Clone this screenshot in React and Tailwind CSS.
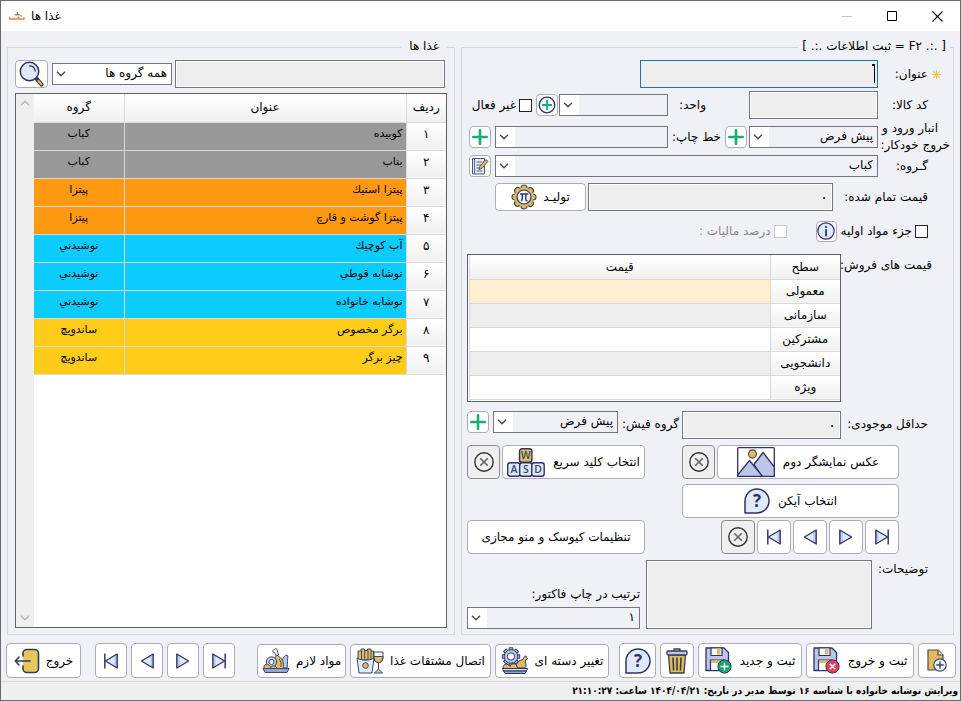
import React from 'react';

const NAVY = '#2f3267';
const PALE = '#dfeaf8';
const LILAC = '#bcc7e8';
const GOLD = '#dfbd5b';

/* ---------- icons ---------- */

function Chevron({ up = false, className = '' }) {
  return (
    <svg viewBox="0 0 10 6" className={`h-[6px] w-[10px] ${className}`} fill="none" stroke="currentColor" strokeWidth="1.3">
      <path d={up ? 'M1 5.2 5 1.2 9 5.2' : 'M1 .8 5 4.8 9 .8'} />
    </svg>
  );
}

function Plus() {
  return (
    <svg viewBox="0 0 16 16" className="size-4" stroke="#12ae74" strokeWidth="2.6" strokeLinecap="round">
      <path d="M8 1.3v13.4M1.3 8h13.4" />
    </svg>
  );
}

function PlusCircle() {
  return (
    <svg viewBox="0 0 18 18" className="size-[18px]" fill="none">
      <circle cx="9" cy="9" r="7.8" fill="#f2f7fd" stroke={NAVY} strokeWidth="1.3" />
      <path d="M9 4v10M4 9h10" stroke="#12ae74" strokeWidth="1.8" />
    </svg>
  );
}

function EditNote() {
  return (
    <svg viewBox="0 0 18 18" className="size-[18px]" fill="none" stroke="#4a5580">
      <path d="M1.5 1.5h12V16.500l-1 .5h-11z" fill={PALE} />
      <path d="M3.5 1.500v15M5.500 5h6M5.500 8h5M5.500 11h3M5.500 14h6" strokeWidth=".9" />
      <path d="m8 12.500 1-3.200L14.800 2.500l2.200 1.800-6 7.100z" fill={GOLD} stroke="#4b4a5e" strokeWidth=".9" />
    </svg>
  );
}

function Search() {
  return (
    <svg viewBox="0 0 26 26" className="size-[26px]" fill="none">
      <path d="m17 17 5.500 6.500" stroke="#3a3a50" strokeWidth="4.200" strokeLinecap="round" />
      <path d="m19.500 20 2.800 3.200" stroke={GOLD} strokeWidth="2" strokeLinecap="round" />
      <circle cx="10.500" cy="10.500" r="9.200" fill={PALE} stroke={NAVY} strokeWidth="1.500" />
      <path d="M10.500 4.800c3.200 0 5.400 2.200 5.700 5.200" stroke={NAVY} strokeWidth="1.300" strokeLinecap="round" />
    </svg>
  );
}

function PiGear() {
  const petals = [0, 45, 90, 135, 180, 225, 270, 315];
  return (
    <svg viewBox="0 0 26 26" className="size-[26px]">
      <g fill={GOLD} stroke="#4b4650" strokeWidth="1.200">
        {petals.map((a) => (
          <circle key={a} cx="13" cy="4" r="3" transform={`rotate(${a} 13 13)`} />
        ))}
      </g>
      <circle cx="13" cy="13" r="9.500" fill={GOLD} />
      <circle cx="13" cy="13" r="7" fill="#eef3fb" stroke={NAVY} strokeWidth="1.200" />
      <path d="M9 10h8.300M11.300 10v4.500c0 1-.4 1.800-1.300 2.300M14.800 10v5.300c0 1 .6 1.600 1.700 1.400" fill="none" stroke={NAVY} strokeWidth="1.400" />
    </svg>
  );
}

function Info() {
  return (
    <svg viewBox="0 0 18 18" className="size-[18px]">
      <circle cx="9" cy="9" r="8.200" fill={PALE} stroke={NAVY} strokeWidth="1.200" />
      <circle cx="9" cy="5" r="1.100" fill={NAVY} />
      <path d="M9 7.800v5.800" stroke={NAVY} strokeWidth="1.800" strokeLinecap="round" />
    </svg>
  );
}

function CancelCircle() {
  return (
    <svg viewBox="0 0 20 20" className="size-5" fill="none" stroke="#333">
      <circle cx="10" cy="10" r="9.200" strokeWidth="1.400" />
      <path d="m6.200 6.200 7.600 7.600M13.800 6.200l-7.600 7.600" stroke="#666" strokeWidth="1.600" />
    </svg>
  );
}

function Wasd() {
  const keys = [
    ['W', 12.5, 0.7, GOLD],
    ['A', 0.7, 14.7, PALE],
    ['S', 12.7, 14.7, PALE],
    ['D', 24.8, 14.7, PALE],
  ];
  return (
    <svg viewBox="0 0 38 29" className="h-[29px] w-[38px] shrink-0">
      {keys.map(([k, x, y, fill]) => (
        <g key={k}>
          <rect x={x} y={y} width="12.4" height="13.600" rx="2.500" fill={fill} stroke={NAVY} strokeWidth="1.400" />
          <text x={x + 6.2} y={y + 10.6} textAnchor="middle" fontSize="10.500" fontWeight="600" fontFamily="Open Sans, sans-serif" fill="#3b4470">
            {k}
          </text>
        </g>
      ))}
    </svg>
  );
}

function Picture() {
  return (
    <svg viewBox="0 0 38 30" className="h-[30px] w-[38px] shrink-0" stroke={NAVY} strokeWidth="1.300" strokeLinejoin="round">
      <rect x=".7" y=".7" width="36.600" height="28.600" rx="1" fill="#fff" />
      <path d="M17 17.500 26 5.500 37.300 20v9.300H25z" fill={LILAC} />
      <path d="M.7 28 12.500 13.500 25.500 29.300H.7z" fill={LILAC} />
      <circle cx="15.500" cy="7" r="4" fill={GOLD} stroke="#5a5560" />
    </svg>
  );
}

function Question() {
  return (
    <svg viewBox="0 0 26 26" className="size-[26px] shrink-0">
      <path d="M13 1a12 12 0 1 1 0 24H1V13A12 12 0 0 1 13 1z" fill={PALE} stroke={NAVY} strokeWidth="1.500" strokeLinejoin="round" />
      <text x="13" y="19" textAnchor="middle" fontSize="17" fontWeight="700" fontFamily="Open Sans, sans-serif" fill={NAVY}>
        ?
      </text>
    </svg>
  );
}

function Step({ back = false, bar = false }) {
  return (
    <svg viewBox="0 0 16 16" className={`size-[18px] ${back ? '-scale-x-100' : ''}`} strokeLinejoin="round">
      <path d="M2.500 1.800v12.400L13 8z" fill={PALE} />
      <path d="M2.500 1.800v12.400l2.500-1.500V3.300z" fill={LILAC} />
      <path d="M2.500 1.800v12.400L13 8z" fill="none" stroke={NAVY} strokeWidth="1.200" />
      {bar && <path d="M13.500 1.300v13.400" stroke={NAVY} strokeWidth="1.300" />}
    </svg>
  );
}

function Exit() {
  return (
    <svg viewBox="0 0 26 26" className="size-[26px] shrink-0" fill="none" strokeLinecap="round" strokeLinejoin="round">
      <rect x="9" y="1.500" width="15.500" height="23" rx="4" fill="#e6c75c" />
      <path d="M9 8V5.500a4 4 0 0 1 4-4h7.500a4 4 0 0 1 4 4v15a4 4 0 0 1-4 4H13a4 4 0 0 1-4-4V18" stroke="#343a58" strokeWidth="1.600" />
      <path d="M16 13H1.500M5 9l-3.700 4L5 17" stroke="#343a58" strokeWidth="1.600" />
    </svg>
  );
}

function Floppy({ badge }) {
  return (
    <svg viewBox="0 0 27 27" className="size-[27px] shrink-0">
      <path d="M1 1h18l4.500 4.500v18H1z" fill={LILAC} stroke={NAVY} strokeWidth="1.300" strokeLinejoin="round" />
      <path d="M6 1h11v7.500H6z" fill="#fff" stroke={NAVY} strokeWidth="1.200" />
      <path d="M12 1.500h3.500v6H12z" fill={GOLD} />
      <path d="M5.500 13h13.500v10.500H5.500z" fill="#fff" stroke={NAVY} strokeWidth="1.200" />
      <path d="M6 13.600h12.500v2.400H6z" fill={GOLD} />
      <circle cx="19.500" cy="19.500" r="6.600" fill={badge === 'plus' ? '#12a869' : '#ea3e56'} stroke={NAVY} />
      <path
        d={badge === 'plus' ? 'M19.500 15.500v8M15.500 19.500h8' : 'm16.800 16.800 5.400 5.400M22.200 16.800l-5.400 5.400'}
        stroke="#fff"
        strokeWidth="1.400"
      />
    </svg>
  );
}

function Trash() {
  return (
    <svg viewBox="0 0 22 26" className="h-[26px] w-[22px]" strokeLinejoin="round" stroke="#3a3b52" strokeWidth="1.300">
      <path d="M8 3V1h6v2" fill="none" />
      <path d="M2.500 7h17L18 25H4z" fill={GOLD} />
      <path d="M7 9.500l.6 13M11 9.500v13M15 9.500l-.6 13" fill="none" strokeWidth="1.600" />
      <rect x="1" y="3" width="20" height="3.800" rx="1" fill={LILAC} />
    </svg>
  );
}

function NewDoc() {
  return (
    <svg viewBox="0 0 20 24" className="h-6 w-5" strokeLinejoin="round" stroke="#4a4a5c" strokeWidth="1.200">
      <path d="M1 1h10l5 5v15H1z" fill={GOLD} />
      <path d="M11 1v5h5" fill="#f1e2a9" />
      <circle cx="13" cy="16" r="6.200" fill="#edf3fb" stroke="#3d4672" />
      <path d="M13 12.300v7.400M9.300 16h7.400" stroke="#3d4672" strokeWidth="1.400" />
    </svg>
  );
}

function Ingredients() {
  return (
    <svg viewBox="0 0 28 26" className="h-[26px] w-7 shrink-0" strokeLinejoin="round" stroke="#3f4771" strokeWidth="1">
      <path d="M19 20c0-6 2-11 5-13l2 1c-1 3 0 8-1 12z" fill={LILAC} />
      <path d="M14.500 8 12.500 4.500c-2 .3-2.300-2.700-.3-3 .7-1.500 3-1 2.900.7L16.500 7z" fill="#fff" />
      <path d="M14.500 7c5 2 8.500 8 6.500 14h-7c-2-5-2-10 .5-14z" fill={GOLD} />
      <path d="M17 11c2 2 2.500 5 2 8" fill="none" />
      <circle cx="9.500" cy="14" r="5.200" fill={LILAC} />
      <circle cx="9.500" cy="14" r="2.500" fill="#fff" />
      <path d="M2 20.500c-1-5 5-6 7.500 0z" fill={GOLD} />
      <path d="M8.500 20.500c1-3.500 5-3.500 6.500 0z" fill={GOLD} />
      <path d="M1 20.500h26l-2 4H3z" fill="#93a5d6" />
    </svg>
  );
}

function FriesWine() {
  return (
    <svg viewBox="0 0 28 26" className="h-[26px] w-7 shrink-0" strokeLinejoin="round" stroke="#3f4771" strokeWidth="1">
      <path d="M2 12V3h3V1h3.500v1.500h3V1H15v2h2.500v9z" fill={GOLD} />
      <path d="M5.500 3v9M8.700 2.500V12M12 2.500V12M15 3v9" />
      <path d="M1 10c5 3 12 3 17 0l-2 15H3z" fill={PALE} />
      <circle cx="9.500" cy="17.500" r="2.800" fill={GOLD} />
      <path d="M18 4h9v6c0 6-9 6-9 0z" fill="#fff" />
      <path d="M18 8.500h9c0 8-9 8-9 0z" fill={GOLD} />
      <path d="M22.500 15v6l-4 4h8l-4-4" fill={LILAC} />
    </svg>
  );
}

function GearFood() {
  const teeth = [0, 45, 90, 135, 180, 225, 270, 315];
  return (
    <svg viewBox="0 0 28 28" className="size-7 shrink-0" strokeLinejoin="round" stroke={NAVY} strokeWidth="1">
      {teeth.map((a) => (
        <rect key={a} x="8.200" y=".8" width="3.600" height="4" fill={LILAC} transform={`rotate(${a} 10 9.500)`} />
      ))}
      <circle cx="10" cy="9.500" r="6.800" fill={LILAC} />
      <circle cx="10" cy="9.500" r="3.700" fill="#fff" />
      <path d="M15 21c0-5 3-8 6-8l2.500-3c.3-1.500 2.500-1 2.200.5 1.300.5.800 2.300-.7 2.100L24 15c2 3 1 6-1 6z" fill={GOLD} />
      <path d="M2 21.500c0-5.500 5-5.500 7-2 1.500-4 7-4 7.500 2z" fill={GOLD} />
      <path d="M1.500 21.500h25l-1 2.500h-23z" fill={PALE} />
      <path d="M2.500 24h23l-1.500 2.500h-20z" fill="#93a5d6" />
    </svg>
  );
}

function AppLogo() {
  return (
    <svg viewBox="0 0 16 10" className="h-[10px] w-4">
      <path d="M.5 6v2h4.500V6.500M5 8h4c2 0 1-3-.5-1.500M9.500 8h5.500V6M11 4.800h2" fill="none" stroke="#e08a45" strokeWidth="1.300" />
      <path d="M5.500 4.500C6 1.800 10.500 1.800 11 4.500zM7.700 1h1.300v1.500H7.700z" fill="#8f8688" />
    </svg>
  );
}

/* ---------- controls ---------- */

function Button({ children, label, gray = false, className = '' }) {
  return (
    <button
      type="button"
      aria-label={label}
      className={`flex shrink-0 items-center justify-center rounded-[4px] border whitespace-nowrap ${
        gray ? 'border-[#8b8b90] bg-[#efefef]' : 'border-[#adadb3] bg-white'
      } ${className}`}
    >
      {children}
    </button>
  );
}

function Select({ id, label, value = '', white = false, className = '' }) {
  return (
    <div className={`relative flex h-[22px] border border-[#76767c] bg-white pl-[19px] ${className}`}>
      <select
        id={id}
        aria-label={label}
        defaultValue={value}
        className={`w-full min-w-0 appearance-none pr-1 pb-[2px] outline-none ${white ? 'bg-white' : 'bg-[#f0f1f7]'}`}
      >
        <option value={value}>{value}</option>
      </select>
      <Chevron className="pointer-events-none absolute top-[7px] left-[3px] text-[#444]" />
    </div>
  );
}

const inputBox = 'h-[28px] min-w-0 border border-[#76767c] bg-[#eeeeee] px-1 shadow-[inset_0_0_0_1px_#fff] outline-none';

function Check({ id, children, disabled = false }) {
  return (
    <label htmlFor={id} className={`flex items-center gap-[3px] whitespace-nowrap ${disabled ? 'text-[#85858b]' : ''}`}>
      <input
        id={id}
        type="checkbox"
        disabled={disabled}
        className={`size-[13px] shrink-0 appearance-none border bg-white ${disabled ? 'border-[#c8c8cc]' : 'border-[#222]'}`}
      />
      {children}
    </label>
  );
}

function RecordNav({ className }) {
  return (
    <>
      <Button label="آخرین" className={className}><Step bar /></Button>
      <Button label="بعدی" className={className}><Step /></Button>
      <Button label="قبلی" className={className}><Step back /></Button>
      <Button label="اولین" className={className}><Step back bar /></Button>
    </>
  );
}

/* ---------- data ---------- */

const foods = [
  ['۱', 'كوبیده', 'کباب', 'bg-[#999999]'],
  ['۲', 'بناب', 'کباب', 'bg-[#999999]'],
  ['۳', 'پیتزا استیك', 'پیتزا', 'bg-[#ff9912]'],
  ['۴', 'پیتزا گوشت و قارچ', 'پیتزا', 'bg-[#ff9912]'],
  ['۵', 'آب كوچیك', 'نوشیدني', 'bg-[#0accff]'],
  ['۶', 'نوشابه قوطي', 'نوشیدني', 'bg-[#0accff]'],
  ['۷', 'نوشابه خانواده', 'نوشیدني', 'bg-[#0accff]'],
  ['۸', 'برگر مخصوص', 'ساندویچ', 'bg-[#ffcc1a]'],
  ['۹', 'چیز برگر', 'ساندویچ', 'bg-[#ffcc1a]'],
];

const levels = [
  ['معمولی', 'bg-[#ffefd0]'],
  ['سازمانی', 'bg-[#eeeeee]'],
  ['مشترکین', 'bg-white'],
  ['دانشجویی', 'bg-[#eeeeee]'],
  ['ویژه', 'bg-white'],
];

const headCell = 'bg-linear-to-b from-white to-[#f0f0f0] font-normal';

/* ---------- panels ---------- */

function TitleBar() {
  return (
    <header className="flex h-[30px] items-center bg-white" dir="ltr">
      <span className="ml-2"><AppLogo /></span>
      <h1 className="ml-[6px]" dir="rtl">غذا ها</h1>
      <div className="mr-[17px] ml-auto flex items-center gap-[35px]">
        <button type="button" aria-label="کوچک کردن" className="flex text-[#c4c4c4]">
          <svg viewBox="0 0 10 10" className="size-[10px]" stroke="currentColor"><path d="M0 5.500h10" /></svg>
        </button>
        <button type="button" aria-label="بزرگ کردن" className="flex">
          <svg viewBox="0 0 10 10" className="size-[10px]" fill="none" stroke="#000"><path d="M.5.5h9v9h-9z" /></svg>
        </button>
        <button type="button" aria-label="بستن" className="flex">
          <svg viewBox="0 0 11 11" className="size-[11px]" stroke="#000" strokeWidth="1.100"><path d="m.5.5 10 10M10.500.5l-10 10" /></svg>
        </button>
      </div>
    </header>
  );
}

function PriceTable() {
  return (
    <div className="h-[148px] flex-1 border border-[#5f5f64] bg-white pl-px">
      <table className="w-full table-fixed border-collapse">
        <thead>
          <tr className="h-6">
            <th scope="col" className={`w-[70px] border-b border-l border-[#d9d9d9] ${headCell}`}>سطح</th>
            <th scope="col" className={`border-b border-l border-[#d9d9d9] ${headCell}`}>قیمت</th>
          </tr>
        </thead>
        <tbody>
          {levels.map(([name, bg]) => (
            <tr key={name} className="h-6">
              <th scope="row" className={`border-b border-l border-[#d9d9d9] p-0 ${headCell}`}>{name}</th>
              <td className={`border-b border-l border-[#d9d9d9] ${bg}`} />
            </tr>
          ))}
        </tbody>
      </table>
    </div>
  );
}

function FormPanel() {
  return (
    <fieldset className="min-w-0 border border-[#d5d6dc] pb-1 pl-[5px]">
      <legend className="mr-[3px] h-5 px-1 leading-[18px]">[ .:. F۲ = ثبت اطلاعات .:. ]</legend>

      <div className="mt-[3px] flex items-center">
        <div className="flex w-[75px] shrink-0 items-center gap-1 pr-3">
          <svg viewBox="0 0 9 9" className="size-[9px]" stroke="#edc84e" strokeWidth="1.200">
            <path d="M4.500 0v9M0 4.500h9M1.300 1.300l6.400 6.400M7.700 1.300 1.300 7.700" />
          </svg>
          <label htmlFor="title">عنوان:</label>
        </div>
        <div className="relative w-[238px]">
          <input id="title" className="h-[28px] w-full border border-[#1b74b5] bg-[#eeeeee] px-1 outline-none" />
          <span className="pointer-events-none absolute top-[4px] right-[3px] h-[19px] w-px bg-black" />
          <span className="pointer-events-none absolute top-[4px] right-[4px] h-[2px] w-[2px] bg-black" />
        </div>
      </div>

      <div className="mt-[3px] flex items-center">
        <label htmlFor="code" className="w-[75px] shrink-0 pr-[25px] whitespace-nowrap">کد کالا:</label>
        <input id="code" className={`w-[129px] ${inputBox}`} />
        <label htmlFor="unit" className="mr-auto ml-1 w-[42px] pr-2 whitespace-nowrap">واحد:</label>
        <Select id="unit" className="w-[109px]" />
        <Button label="افزودن واحد" className="mr-px ml-1 size-[22px]"><PlusCircle /></Button>
        <div className="w-[65px]"><Check id="inactive">غیر فعال</Check></div>
      </div>

      <div className="mt-px flex h-[34px] items-center">
        <label htmlFor="store" className="w-[75px] shrink-0 pr-[3px] leading-[17px] whitespace-nowrap">
          <span className="block pr-3">انبار ورود و</span>
          <span className="block">خروج خودکار:</span>
        </label>
        <Select id="store" value="پیش فرض" className="w-[129px] shrink-0" />
        <Button label="افزودن انبار" className="mr-[2px] size-[22px]"><Plus /></Button>
        <label htmlFor="printer" className="w-[57px] shrink-0 pr-1 whitespace-nowrap">خط چاپ:</label>
        <Select id="printer" className="min-w-0 flex-1" />
        <Button label="افزودن خط چاپ" className="mr-1 ml-[2px] size-[22px]"><Plus /></Button>
      </div>

      <div className="mt-px flex items-center">
        <label htmlFor="group" className="w-[75px] shrink-0 pr-[25px] whitespace-nowrap">گـروه:</label>
        <Select id="group" value="کباب" className="min-w-0 flex-1" />
        <Button label="ویرایش گروه" className="mr-1 ml-[2px] size-[22px]"><EditNote /></Button>
      </div>

      <div className="mt-[6px] flex items-center">
        <label htmlFor="cost" className="w-[120px] shrink-0 pr-[25px] whitespace-nowrap">قیمت تمام شده:</label>
        <input id="cost" defaultValue="۰" className={`flex-1 text-[15px] ${inputBox}`} />
        <Button className="mr-[2px] ml-7 h-[28px] w-[91px] gap-[6px]">تولیـد<PiGear /></Button>
      </div>

      <div className="mt-[9px] flex h-[22px] items-center pr-[25px]">
        <Check id="raw">جزء مواد اولیه</Check>
        <Button label="راهنما" className="mr-1 ml-[29px] size-[21px]"><Info /></Button>
        <Check id="tax" disabled>درصد مالیات :</Check>
      </div>

      <div className="mt-3 flex items-start">
        <div className="w-[112px] shrink-0 pt-[2px] pr-[21px] whitespace-nowrap">قیمت های فروش:</div>
        <PriceTable />
      </div>

      <div className="mt-[9px] flex items-start">
        <label htmlFor="min" className="w-[112px] shrink-0 pt-1 pr-[25px] whitespace-nowrap">حداقل موجودی:</label>
        <input id="min" defaultValue="۰" className={`flex-1 text-[15px] ${inputBox}`} />
        <label htmlFor="receipt" className="w-[64px] shrink-0 pt-1 pr-[3px] whitespace-nowrap">گروه فیش:</label>
        <Select id="receipt" value="پیش فرض" className="w-[125px] shrink-0" />
        <Button label="افزودن گروه فیش" className="mr-1 size-[22px]"><Plus /></Button>
      </div>

      <div className="mt-[6px] flex justify-between pr-[54px]">
        <div className="w-[217px]">
          <div className="flex gap-[2px]">
            <Button className="h-[34px] flex-1 gap-2">عکس نمایشگر دوم<Picture /></Button>
            <Button gray label="حذف عکس" className="h-[34px] w-[33px]"><CancelCircle /></Button>
          </div>
          <Button className="mt-[5px] h-[34px] w-full gap-2">انتخاب آیکن<Question /></Button>
          <div className="mt-[2px] flex gap-[2px]">
            <RecordNav className="size-[34px]" />
            <Button gray label="حذف آیکن" className="size-[34px]"><CancelCircle /></Button>
          </div>
        </div>
        <div className="flex w-[178px] flex-col justify-between">
          <div className="flex gap-[2px]">
            <Button className="h-[34px] flex-1 gap-2">انتخاب کلید سریع<Wasd /></Button>
            <Button gray label="حذف کلید" className="h-[34px] w-[33px]"><CancelCircle /></Button>
          </div>
          <Button className="h-[34px] w-full">تنظیمات کیوسک و منو مجازی</Button>
        </div>
      </div>

      <div className="mt-[6px] flex">
        <label htmlFor="notes" className="w-[81px] shrink-0 pr-[25px] whitespace-nowrap">توضیحات:</label>
        <textarea id="notes" className="h-[69px] min-w-0 flex-1 resize-none border border-[#76767c] bg-[#eeeeee] shadow-[inset_0_0_0_1px_#fff] outline-none" />
        <div className="mr-[6px] flex w-[173px] shrink-0 flex-col justify-end gap-1">
          <label htmlFor="order">ترتیب در چاپ فاکتور:</label>
          <Select id="order" value="۱" />
        </div>
      </div>
    </fieldset>
  );
}

function FoodsPanel() {
  return (
    <fieldset className="flex min-w-0 flex-col border border-[#d5d6dc] pr-[7px] pb-[6px] pl-[7px]">
      <legend className="h-5 px-2 leading-[18px]">غذا ها</legend>
      <div className="flex h-full flex-col">
        <div className="mt-[3px] flex items-center pr-[2px]">
          <input aria-label="جستجوی غذا" className={`flex-1 ${inputBox}`} />
          <Select label="گروه" value="همه گروه ها" white className="mr-[3px] w-[120px]" />
          <Button label="جستجو" className="mr-1 h-[28px] w-[33px]"><Search /></Button>
        </div>
        <div className="mt-[5px] flex flex-1 border border-[#5f5f64] bg-white">
          <div className="flex-1">
            <table className="w-full table-fixed border-collapse">
              <thead>
                <tr className="h-7">
                  <th scope="col" className={`w-10 border-b border-l border-[#d9d9d9] p-0 pb-[2px] ${headCell}`}>ردیف</th>
                  <th scope="col" className={`border-b border-l border-[#d9d9d9] p-0 pb-[2px] ${headCell}`}>عنوان</th>
                  <th scope="col" className={`w-[90px] border-b border-[#d9d9d9] p-0 pb-[2px] ${headCell}`}>گروه</th>
                </tr>
              </thead>
              <tbody>
                {foods.map(([n, name, group, bg]) => (
                  <tr key={n} className="h-7">
                    <th scope="row" className={`border-b border-l border-[#d9d9d9] p-0 pb-1 ${headCell}`}>{n}</th>
                    <td className={`border-b border-l border-[#d9d9d9] p-0 pr-[3px] pb-1 text-[11px] ${bg}`}>{name}</td>
                    <td className={`border-b border-[#d9d9d9] p-0 pb-1 text-center text-[11px] ${bg}`}>{group}</td>
                  </tr>
                ))}
              </tbody>
            </table>
          </div>
          <div className="flex w-[18px] flex-col items-center justify-between bg-[#efefef] py-[6px] text-[#b5b5b8]">
            <Chevron up />
            <Chevron />
          </div>
        </div>
      </div>
    </fieldset>
  );
}

function Toolbar() {
  return (
    <nav className="mt-2 flex items-center gap-1 pr-1 pl-[5px]">
      <Button label="جدید" className="h-[35px] w-[38px]"><NewDoc /></Button>
      <Button className="h-[35px] w-[108px] gap-2">ثبت و خروج<Floppy badge="cross" /></Button>
      <Button className="h-[35px] w-[104px] gap-2">ثبت و جدید<Floppy badge="plus" /></Button>
      <Button label="حذف" className="h-[35px] w-[34px]"><Trash /></Button>
      <Button label="راهنما" className="h-[35px] w-[37px]"><Question /></Button>
      <Button className="mr-[6px] h-[34px] w-[114px] gap-[6px]">تغییر دسته ای<GearFood /></Button>
      <Button className="h-[34px] w-[141px] gap-[6px]">اتصال مشتقات غذا<FriesWine /></Button>
      <Button className="h-[34px] w-[89px] gap-[6px]">مواد لازم<Ingredients /></Button>
      <div className="mr-auto flex gap-1">
        <RecordNav className="h-[35px] w-8" />
      </div>
      <Button className="mr-[10px] h-[35px] w-[75px] gap-[6px]">خروج<Exit /></Button>
    </nav>
  );
}

export default function App() {
  return (
    <div
      dir="rtl"
      className="flex min-h-screen flex-col border border-[#6b6b6e] bg-[#f0f1f7] font-['DejaVu_Sans','Noto_Sans',sans-serif] text-[12px] leading-[18px] text-black"
    >
      <TitleBar />
      <main className="grid flex-1 grid-cols-[493fr_448fr] gap-[6px] pt-[6px] pr-[6px] pl-[6px]">
        <FormPanel />
        <FoodsPanel />
      </main>
      <Toolbar />
      <footer className="mt-[3px] h-[19px] border-t border-[#d9d9dc] bg-[#efefef] pr-[2px] font-['DejaVu_Sans_Condensed','DejaVu_Sans',sans-serif] text-[10px] leading-[17px] font-bold">
        ویرایش نوشابه خانواده با شناسه ۱۶ توسط مدیر در تاریخ: ۱۴۰۴/۰۴/۲۱ ساعت: ۲۱:۱۰:۲۷
      </footer>
    </div>
  );
}
